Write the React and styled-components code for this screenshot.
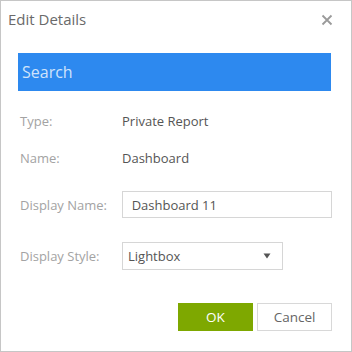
import React from "react";
import styled, { createGlobalStyle } from "styled-components";

const Global = createGlobalStyle`
  html, body { margin: 0; padding: 0; background: #fff; }
  * { box-sizing: border-box; }
`;

const Dialog = styled.div`
  width: 352px;
  height: 352px;
  border: 1px solid #c6c6c6;
  background: #fff;
  font-family: "Open Sans", "Noto Sans", sans-serif;
  display: flex;
  flex-direction: column;
  padding: 0 19px 0 17px;
`;

const Header = styled.div`
  height: 52px;
  display: flex;
  align-items: flex-start;
  justify-content: space-between;
  margin-left: -10px;
  padding-top: 7px;
`;

const Title = styled.h1`
  margin: 0;
  font-size: 15px;
  font-weight: 400;
  color: #6a6a6a;
  line-height: 22px;
`;

const CloseButton = styled.button`
  border: 0;
  background: none;
  padding: 0;
  width: 12px;
  height: 12px;
  margin-top: 6px;
  margin-right: -1px;
  display: flex;
  cursor: pointer;
`;

const SearchBar = styled.div`
  height: 38px;
  margin-right: 1px;
  background: #2d89ef;
  color: #cfe3fb;
  font-size: 16px;
  display: flex;
  align-items: center;
  padding-left: 4px;
`;

const Row = styled.div`
  display: flex;
  align-items: center;
  height: 27px;
  margin-top: ${(p) => p.$gap}px;
  padding-left: 2px;
  font-size: 13px;
`;

const Label = styled.div`
  width: 102px;
  color: #a3a3a3;
`;

const Value = styled.div`
  color: #555;
`;

const TextInput = styled.input`
  width: 211px;
  height: 27px;
  border: 1px solid #d6d6d6;
  font: inherit;
  font-size: 13px;
  color: #555;
  padding: 0 9px;
  outline: none;
`;

const Select = styled.div`
  width: 161px;
  height: 28px;
  border: 1px solid #d6d6d6;
  color: #555;
  display: flex;
  align-items: center;
  justify-content: space-between;
  padding: 0 11px 0 5px;
`;

const Footer = styled.div`
  margin-top: 34px;
  display: flex;
  justify-content: flex-end;
  gap: 4px;
`;

const Button = styled.button`
  width: 75px;
  height: 28px;
  font-family: inherit;
  font-size: 13.5px;
  cursor: pointer;
  border: 1px solid ${(p) => (p.$primary ? "#7ea800" : "#d8d8d8")};
  background: ${(p) => (p.$primary ? "#7ea800" : "#fff")};
  color: ${(p) => (p.$primary ? "#fff" : "#666")};
`;

export default function App() {
  return (
    <>
      <Global />
      <Dialog>
        <Header>
          <Title>Edit Details</Title>
          <CloseButton aria-label="Close">
            <svg width="12" height="12" viewBox="0 0 12 12">
              <path d="M1.5 1.5 L10.5 10.5 M10.5 1.5 L1.5 10.5" stroke="#9a9a9a" strokeWidth="1.8" />
            </svg>
          </CloseButton>
        </Header>
        <SearchBar>Search</SearchBar>
        <Row $gap={16}>
          <Label>Type:</Label>
          <Value>Private Report</Value>
        </Row>
        <Row $gap={10}>
          <Label>Name:</Label>
          <Value>Dashboard</Value>
        </Row>
        <Row $gap={20}>
          <Label>Display Name:</Label>
          <TextInput defaultValue="Dashboard 11" />
        </Row>
        <Row $gap={24}>
          <Label>Display Style:</Label>
          <Select>
            <span>Lightbox</span>
            <svg width="8" height="6" viewBox="0 0 8 6">
              <path d="M0.5 0.5 L7.5 0.5 L4 5.5 Z" fill="#555" />
            </svg>
          </Select>
        </Row>
        <Footer>
          <Button $primary>OK</Button>
          <Button>Cancel</Button>
        </Footer>
      </Dialog>
    </>
  );
}
